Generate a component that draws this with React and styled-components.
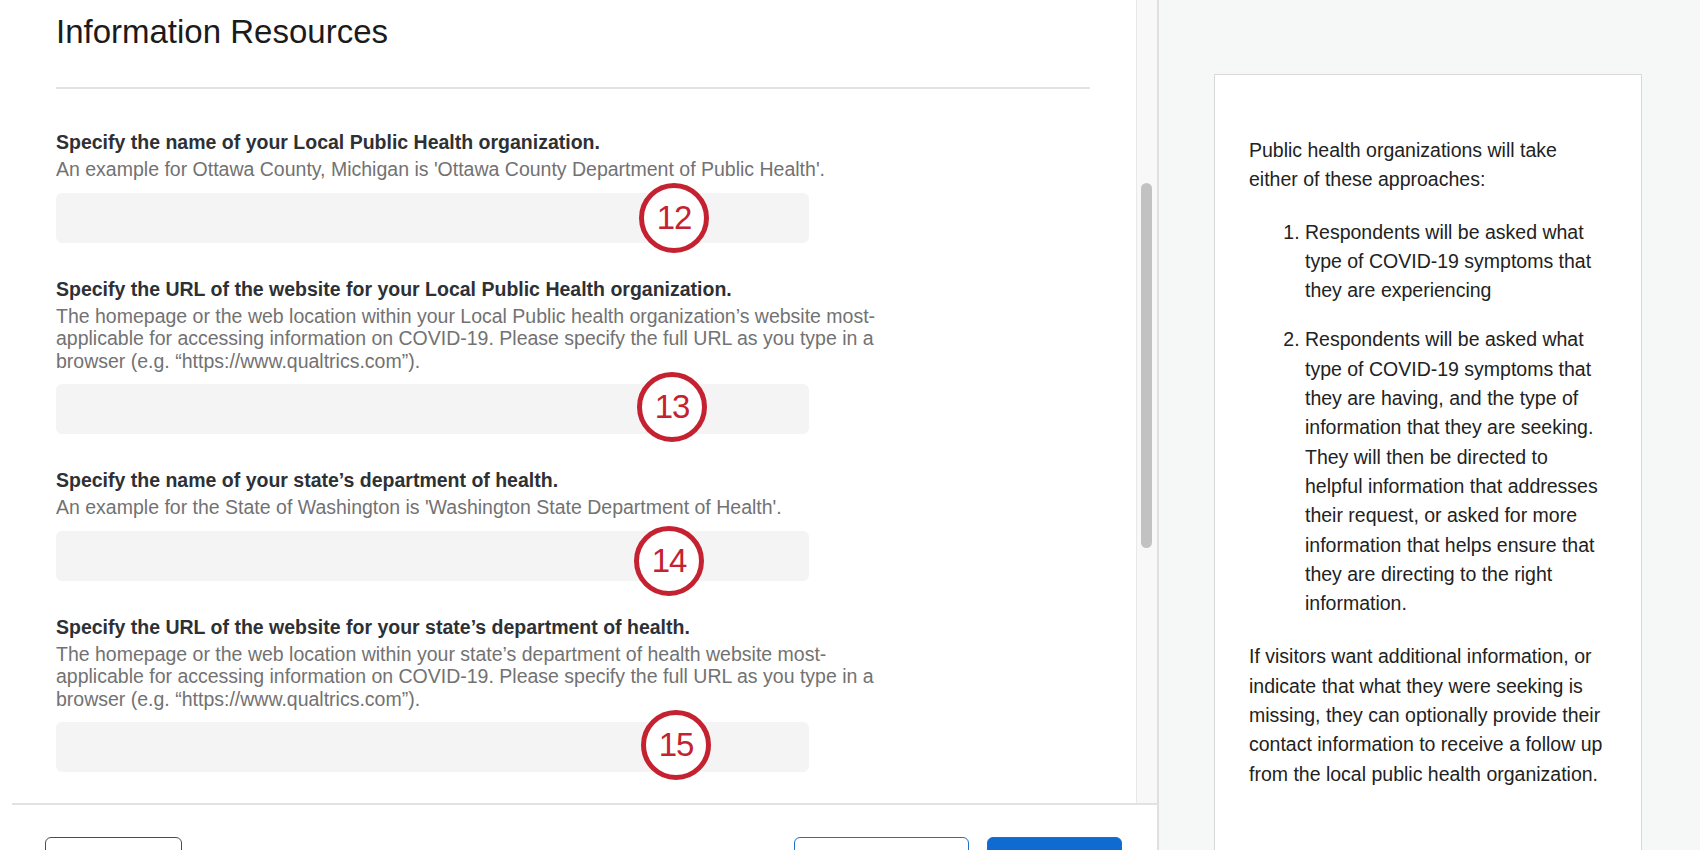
import React from "react";
import styled, { createGlobalStyle } from "styled-components";

const GlobalStyle = createGlobalStyle`
  html, body {
    margin: 0;
    padding: 0;
    height: 100%;
    overflow: hidden;
  }
  body {
    font-family: "Liberation Sans", Arial, sans-serif;
    background: #ffffff;
    color: #222;
  }
  #root {
    height: 100%;
  }
`;

const Page = styled.div`
  display: flex;
  height: 100vh;
  overflow: hidden;
`;

const MainColumn = styled.div`
  width: 1157px;
  flex-shrink: 0;
  display: flex;
  flex-direction: column;
  background: #fff;
`;

const ScrollArea = styled.div`
  flex: 1;
  min-height: 0;
  display: flex;
`;

const Content = styled.div`
  flex: 1;
  overflow: hidden;
  padding: 11px 46px 0 56px;
`;

const Title = styled.h1`
  margin: 0;
  font-size: 33px;
  line-height: 41px;
  font-weight: 400;
  color: #1b1b1b;
`;

const Divider = styled.hr`
  margin: 35px 0 0;
  border: none;
  height: 2px;
  background: #e2e2e2;
`;

const QuestionList = styled.div`
  display: flex;
  flex-direction: column;
  gap: 34px;
  margin-top: 41px;
`;

const Question = styled.div`
  display: flex;
  flex-direction: column;
`;

const Label = styled.div`
  font-size: 19.5px;
  line-height: 24px;
  font-weight: 700;
  color: #2d3135;
`;

const Hint = styled.div`
  margin-top: 4px;
  max-width: 845px;
  font-size: 19.5px;
  line-height: 22.5px;
  color: #727272;
`;

const InputWrap = styled.div`
  position: relative;
  margin-top: 12px;
  width: 753px;
`;

const TextInput = styled.input`
  display: block;
  box-sizing: border-box;
  width: 100%;
  height: 50px;
  border: none;
  border-radius: 6px;
  background: #f4f4f4;
  outline: none;
`;

/* numbered callout drawn over the field */
const Badge = styled.span`
  position: absolute;
  left: ${(p) => p.$x - 35}px;
  top: calc(50% + ${(p) => p.$dy}px);
  transform: translateY(-50%);
  box-sizing: border-box;
  width: 70px;
  height: 70px;
  border: 5px solid #c42230;
  border-radius: 50%;
  background: #fff;
  display: flex;
  align-items: center;
  justify-content: center;
  font-size: 33px;
  letter-spacing: -1px;
  color: #c42230;
  pointer-events: none;
`;

const ScrollTrack = styled.div`
  width: 21px;
  box-sizing: border-box;
  flex-shrink: 0;
  background: #f8f8f8;
  border-left: 1px solid #e8e8e8;
  padding: 183px 0 0 4px;
`;

const Thumb = styled.div`
  width: 11px;
  height: 365px;
  border-radius: 6px;
  background: #c2c2c2;
`;

const Footer = styled.div`
  height: 47px;
  box-sizing: border-box;
  margin-left: 12px;
  border-top: 2px solid #e2e2e2;
  padding: 32px 35px 0 33px;
  display: flex;
  justify-content: space-between;
  overflow: hidden;
`;

const ButtonGroup = styled.div`
  display: flex;
  gap: 18px;
`;

const Button = styled.button`
  box-sizing: border-box;
  width: ${(p) => p.$w}px;
  height: 44px;
  border-radius: 6px;
  border: 1.5px solid ${(p) => (p.$variant === "neutral" ? "#4d4d4d" : "#1a6fd1")};
  background: ${(p) => (p.$variant === "primary" ? "#0f6bd0" : "#fff")};
`;

const SidePanel = styled.aside`
  flex: 1;
  background: #f6f7f7;
  border-left: 2px solid #e0e0e0;
  padding: 74px 58px 0 55px;
  overflow: hidden;
`;

const Card = styled.div`
  background: #fff;
  border: 1px solid #d9d9d9;
  min-height: 900px;
  padding: 61px 0 0 34px;
  font-size: 19.5px;
  line-height: 29.3px;
  color: #222;
`;

const CardText = styled.div`
  width: 356px;
`;

const Para = styled.p`
  margin: 0;
  & + ol {
    margin-top: 23px;
  }
`;

const Steps = styled.ol`
  margin: 0;
  padding-left: 56px;
  & + p {
    margin-top: 24px;
  }
`;

const Step = styled.li`
  & + & {
    margin-top: 20px;
  }
`;

const questions = [
  {
    label: "Specify the name of your Local Public Health organization.",
    hint: "An example for Ottawa County, Michigan is 'Ottawa County Department of Public Health'.",
    badge: 12,
    x: 618,
    dy: 0,
  },
  {
    label: "Specify the URL of the website for your Local Public Health organization.",
    hint: "The homepage or the web location within your Local Public health organization\u2019s website most-applicable for accessing information on COVID-19. Please specify the full URL as you type in a browser (e.g. \u201chttps://www.qualtrics.com\u201d).",
    badge: 13,
    x: 616,
    dy: -2,
  },
  {
    label: "Specify the name of your state\u2019s department of health.",
    hint: "An example for the State of Washington is 'Washington State Department of Health'.",
    badge: 14,
    x: 613,
    dy: 5,
  },
  {
    label: "Specify the URL of the website for your state\u2019s department of health.",
    hint: "The homepage or the web location within your state\u2019s department of health website most-applicable for accessing information on COVID-19. Please specify the full URL as you type in a browser (e.g. \u201chttps://www.qualtrics.com\u201d).",
    badge: 15,
    x: 620,
    dy: -2,
  },
];

function App() {
  return (
    <>
      <GlobalStyle />
      <Page>
        <MainColumn>
          <ScrollArea>
            <Content>
              <Title>Information Resources</Title>
              <Divider />
              <QuestionList>
                {questions.map((q) => (
                  <Question key={q.badge}>
                    <Label>{q.label}</Label>
                    <Hint>{q.hint}</Hint>
                    <InputWrap>
                      <TextInput type="text" aria-label={q.label} />
                      <Badge $x={q.x} $dy={q.dy}>{q.badge}</Badge>
                    </InputWrap>
                  </Question>
                ))}
              </QuestionList>
            </Content>
            <ScrollTrack>
              <Thumb />
            </ScrollTrack>
          </ScrollArea>
          <Footer>
            <Button $variant="neutral" $w={137} aria-label="Back" />
            <ButtonGroup>
              <Button $variant="outline" $w={175} aria-label="Save" />
              <Button $variant="primary" $w={135} aria-label="Next" />
            </ButtonGroup>
          </Footer>
        </MainColumn>
        <SidePanel>
          <Card>
            <CardText>
              <Para>Public health organizations will take either of these approaches:</Para>
              <Steps>
                <Step>Respondents will be asked what type of COVID-19 symptoms that they are experiencing</Step>
                <Step>
                  Respondents will be asked what type of COVID-19 symptoms that they are having, and the type of
                  information that they are seeking. They will then be directed to helpful information that
                  addresses their request, or asked for more information that helps ensure that they are directing
                  to the right information.
                </Step>
              </Steps>
              <Para>
                If visitors want additional information, or indicate that what they were seeking is missing, they can
                optionally provide their contact information to receive a follow up from the local public health
                organization.
              </Para>
            </CardText>
          </Card>
        </SidePanel>
      </Page>
    </>
  );
}

export default App;
